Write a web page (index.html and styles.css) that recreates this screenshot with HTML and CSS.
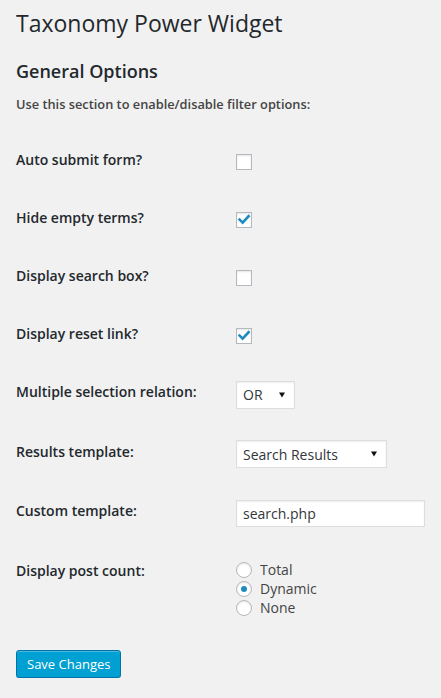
FILE: index.html
```html
<!DOCTYPE html>
<html lang="en">
<head>
<meta charset="utf-8">
<title>Taxonomy Power Widget</title>
<link rel="stylesheet" href="styles.css">
</head>
<body>
<div class="wrap">
  <h1 class="title">Taxonomy Power Widget</h1>
  <h2 class="section">General Options</h2>
  <p class="desc">Use this section to enable/disable filter options:</p>

  <div class="rows">
    <div class="row">
      <div class="label">Auto submit form?</div>
      <div class="field field-check"><span class="cb"></span></div>
    </div>
    <div class="row">
      <div class="label">Hide empty terms?</div>
      <div class="field field-check"><span class="cb"><svg viewBox="0 0 16 16" width="16" height="16"><path d="M3.6 7.6 L6.6 10.6 L12.6 4.2" fill="none" stroke="#1e8cbe" stroke-width="2.6" stroke-linecap="square"/></svg></span></div>
    </div>
    <div class="row">
      <div class="label">Display search box?</div>
      <div class="field field-check"><span class="cb"></span></div>
    </div>
    <div class="row">
      <div class="label">Display reset link?</div>
      <div class="field field-check"><span class="cb"><svg viewBox="0 0 16 16" width="16" height="16"><path d="M3.6 7.6 L6.6 10.6 L12.6 4.2" fill="none" stroke="#1e8cbe" stroke-width="2.6" stroke-linecap="square"/></svg></span></div>
    </div>
    <div class="row row-tall">
      <div class="label">Multiple selection relation:</div>
      <div class="field field-input">
        <div class="select select-short"><span class="select-text">OR</span><svg class="arrow" viewBox="0 0 8 8" width="8" height="8"><path d="M1 1.5 H7 L4 6.5 Z" fill="#111"/></svg></div>
      </div>
    </div>
    <div class="row row-tall">
      <div class="label">Results template:</div>
      <div class="field field-input">
        <div class="select select-long"><span class="select-text">Search Results</span><svg class="arrow" viewBox="0 0 8 8" width="8" height="8"><path d="M1 1.5 H7 L4 6.5 Z" fill="#111"/></svg></div>
      </div>
    </div>
    <div class="row row-tall">
      <div class="label">Custom template:</div>
      <div class="field field-input">
        <div class="textbox">search.php</div>
      </div>
    </div>
    <div class="row">
      <div class="label">Display post count:</div>
      <div class="field field-radio">
        <div class="radio-line"><span class="radio"></span><span>Total</span></div>
        <div class="radio-line"><span class="radio on"><span class="dot"></span></span><span>Dynamic</span></div>
        <div class="radio-line"><span class="radio"></span><span>None</span></div>
      </div>
    </div>
  </div>

  <div class="submit"><span class="button">Save Changes</span></div>
</div>
</body>
</html>
```

FILE: styles.css
```css
html, body {
  margin: 0;
  padding: 0;
  background: #f1f1f1;
}
body {
  font-family: "Open Sans", "Liberation Sans", sans-serif;
  color: #23282d;
  font-size: 13px;
}
.wrap {
  padding: 0 16px;
}
.title {
  margin: 0;
  padding: 9px 0 0;
  font-size: 23px;
  line-height: 29px;
  font-weight: 400;
  color: #23282d;
}
.section {
  margin: 21px 0 0;
  font-size: 18px;
  line-height: 24px;
  font-weight: 600;
  color: #23282d;
}
.desc {
  margin: 12px 0 0;
  font-size: 12.8px;
  line-height: 18px;
  font-weight: 600;
  color: #444;
}
.rows {
  margin-top: 18px;
}
.row {
  display: flex;
  align-items: flex-start;
}
.label {
  width: 220px;
  flex: none;
  padding: 20px 0;
  font-size: 14px;
  line-height: 18px;
  font-weight: 600;
  color: #23282d;
}
.field {
  flex: 1;
}
.field-check {
  padding-top: 22.5px;
}
.cb {
  display: block;
  width: 14px;
  height: 14px;
  border: 1px solid #b4b9be;
  background: #fff;
  box-shadow: inset 0 1px 2px rgba(0,0,0,.1);
}
.cb svg {
  display: block;
  margin: -1px 0 0 -1px;
}
.row-tall {
  min-height: 59.5px;
}
.field-input {
  padding-top: 17.5px;
}
.select {
  box-sizing: border-box;
  height: 28px;
  border: 1px solid #ddd;
  background: #fff;
  box-shadow: inset 0 1px 2px rgba(0,0,0,.07);
  display: flex;
  align-items: center;
  justify-content: space-between;
  padding: 0 8px 0 6px;
  font-size: 14px;
  color: #32373c;
}
.select-short { width: 59px; }
.select-long { width: 151px; }
.arrow { display: block; }
.textbox {
  box-sizing: border-box;
  width: 189px;
  height: 27px;
  border: 1px solid #ddd;
  background: #fff;
  box-shadow: inset 0 1px 2px rgba(0,0,0,.07);
  padding: 0 6px;
  font-size: 14px;
  line-height: 25px;
  color: #32373c;
}
.field-radio {
  padding-top: 18.5px;
}
.radio-line {
  display: flex;
  align-items: center;
  gap: 8px;
  height: 19px;
  font-size: 14px;
  color: #444;
}
.radio {
  box-sizing: border-box;
  width: 16px;
  height: 16px;
  border: 1px solid #b4b9be;
  border-radius: 50%;
  background: #fff;
  box-shadow: inset 0 1px 2px rgba(0,0,0,.1);
  display: flex;
  align-items: center;
  justify-content: center;
  flex: none;
}
.dot {
  width: 6px;
  height: 6px;
  border-radius: 50%;
  background: #1e8cbe;
}
.submit {
  padding-top: 33px;
}
.button {
  display: inline-block;
  box-sizing: border-box;
  height: 28px;
  padding: 0 10px;
  line-height: 26px;
  font-size: 13px;
  color: #fff;
  background: #00a0d2;
  border: 1px solid #0073aa;
  border-radius: 3px;
  box-shadow: inset 0 1px 0 rgba(120,200,230,.6), 0 1px 0 rgba(0,0,0,.15);
}
```
